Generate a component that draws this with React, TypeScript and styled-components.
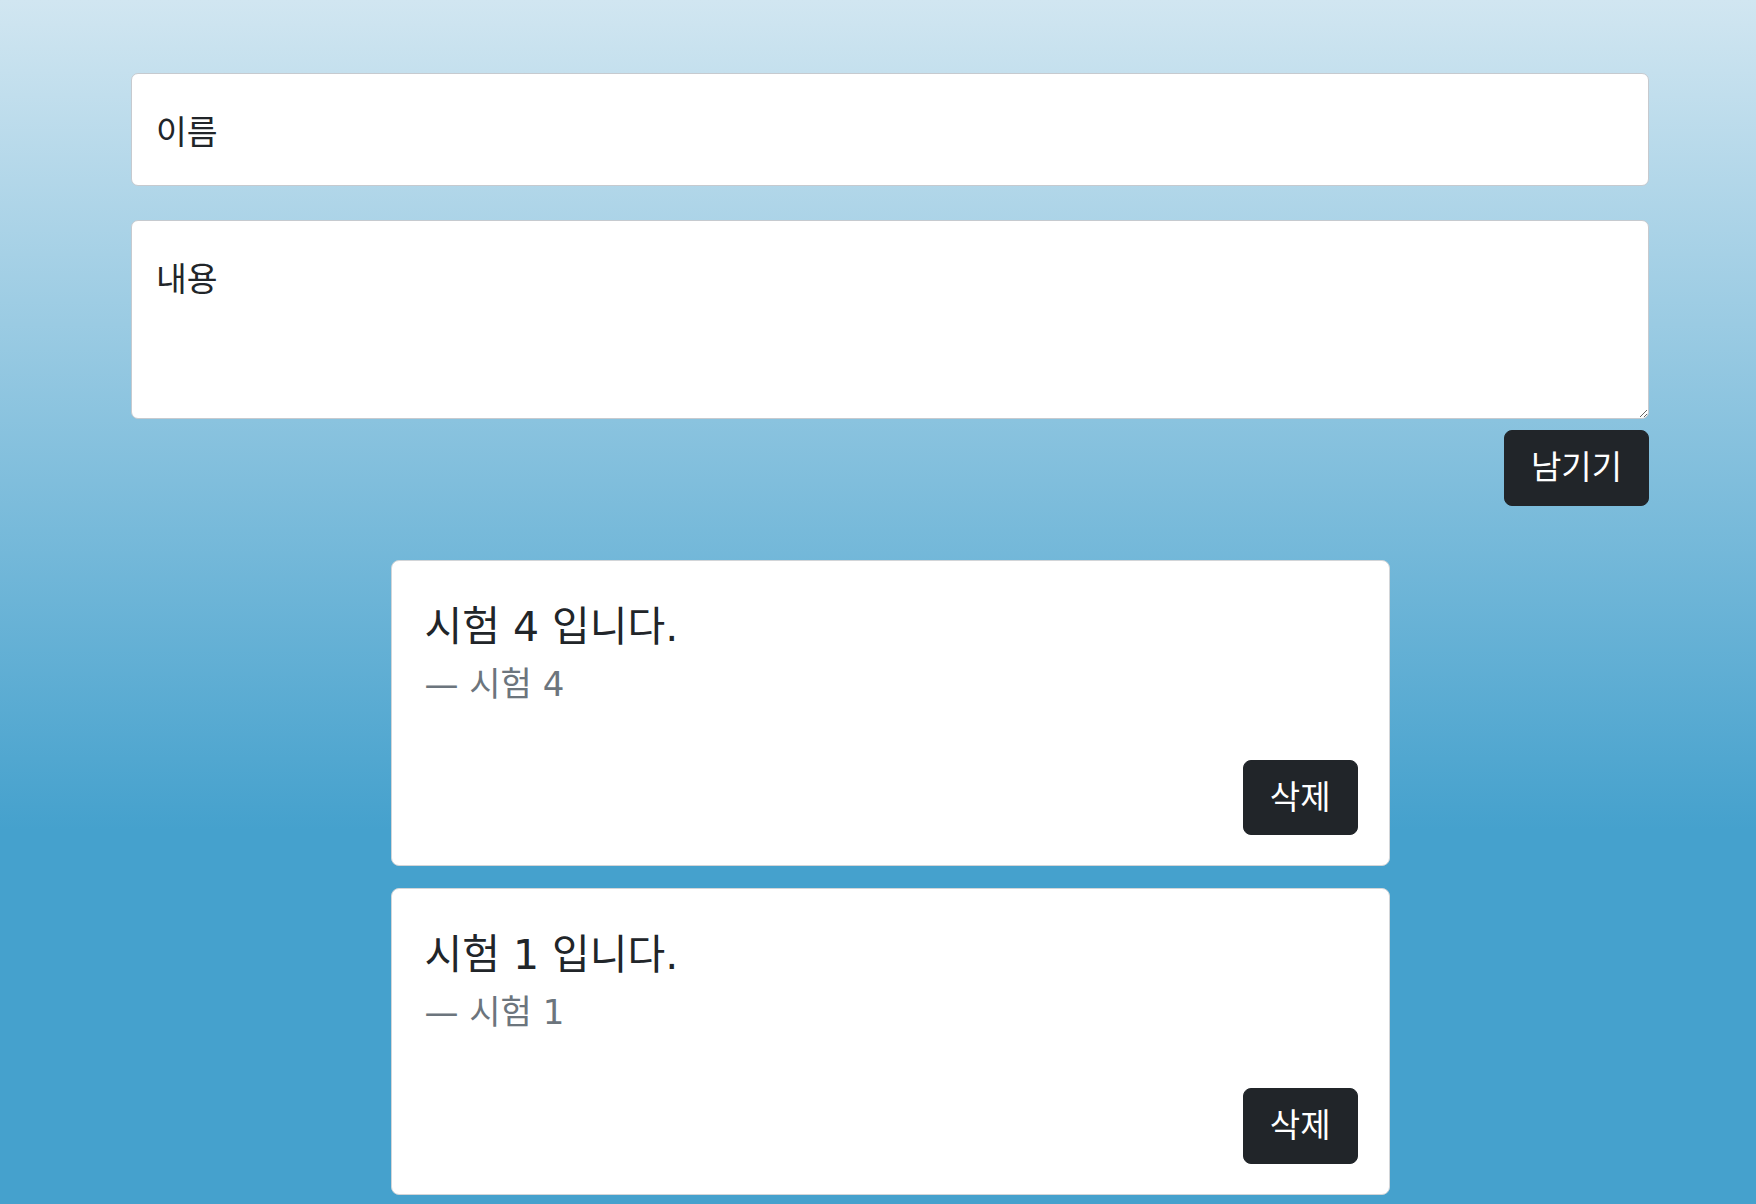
import React, { useState } from "react";
import styled, { createGlobalStyle } from "styled-components";

const GlobalStyle = createGlobalStyle`
  * {
    box-sizing: border-box;
  }
  body {
    margin: 0;
    min-height: 100vh;
    font-family: "DejaVu Sans", "Noto Sans CJK KR", sans-serif;
    color: #212529;
    background-color: #45a1cd;
    background-image: linear-gradient(180deg, #d1e6f1 0px, #45a1cd 830px);
    background-repeat: no-repeat;
  }
`;

const Page = styled.div`
  padding: 73px 107px 40px 131px;
`;

const Form = styled.form`
  display: flex;
  flex-direction: column;
`;

const Field = styled.input`
  height: 113px;
  padding: 6px 24px 0;
  font: inherit;
  font-size: 33.5px;
  line-height: 1.5;
  color: #212529;
  background: #fff;
  border: 1.5px solid #c6cacf;
  border-radius: 7px;
  outline: none;
  &::placeholder {
    color: #212529;
  }
`;

const Area = styled.textarea`
  height: 199px;
  margin-top: 34px;
  padding: 34px 24px 20px;
  font: inherit;
  font-size: 33.5px;
  line-height: 1.5;
  color: #212529;
  background: #fff;
  border: 1.5px solid #c6cacf;
  border-radius: 7px;
  outline: none;
  resize: vertical;
  &::placeholder {
    color: #212529;
  }
`;

const FormFooter = styled.div`
  display: flex;
  justify-content: flex-end;
  margin-top: 11px;
`;

const DarkButton = styled.button`
  padding: 12px 26px;
  font: inherit;
  font-size: 33px;
  line-height: 1.5;
  color: #fff;
  background: #212529;
  border: 1px solid #212529;
  border-radius: 8px;
  cursor: pointer;
`;

const List = styled.div`
  width: 999px;
  margin: 54px auto 0;
  display: flex;
  flex-direction: column;
  gap: 22px;
`;

const Card = styled.div`
  display: flex;
  flex-direction: column;
  padding: 32px 31px 30px 33px;
  background: #fff;
  border: 1.5px solid #d2d5d8;
  border-radius: 8px;
`;

const Quote = styled.p`
  margin: 6px 0 0;
  font-size: 41px;
  line-height: 57px;
`;

const Author = styled.div`
  margin-top: 3px;
  font-size: 34px;
  line-height: 1.5;
  color: #6c757d;
`;

const CardFooter = styled.div`
  display: flex;
  justify-content: flex-end;
  margin-top: 50px;
`;

interface IEntry {
  id: number;
  name: string;
  text: string;
}

function App() {
  const [entries, setEntries] = useState<IEntry[]>([
    { id: 4, name: "시험 4", text: "시험 4 입니다." },
    { id: 1, name: "시험 1", text: "시험 1 입니다." },
  ]);
  const [name, setName] = useState("");
  const [text, setText] = useState("");

  const onSubmit = (e: React.FormEvent) => {
    e.preventDefault();
    if (!name || !text) return;
    setEntries((prev) => [{ id: Date.now(), name, text }, ...prev]);
    setName("");
    setText("");
  };

  const onDelete = (id: number) =>
    setEntries((prev) => prev.filter((entry) => entry.id !== id));

  return (
    <>
      <GlobalStyle />
      <Page>
        <Form onSubmit={onSubmit}>
          <Field
            placeholder="이름"
            value={name}
            onChange={(e) => setName(e.target.value)}
          />
          <Area
            placeholder="내용"
            value={text}
            onChange={(e) => setText(e.target.value)}
          />
          <FormFooter>
            <DarkButton type="submit">남기기</DarkButton>
          </FormFooter>
        </Form>
        <List>
          {entries.map((entry) => (
            <Card key={entry.id}>
              <Quote>{entry.text}</Quote>
              <Author>— {entry.name}</Author>
              <CardFooter>
                <DarkButton type="button" onClick={() => onDelete(entry.id)}>
                  삭제
                </DarkButton>
              </CardFooter>
            </Card>
          ))}
        </List>
      </Page>
    </>
  );
}

export default App;
